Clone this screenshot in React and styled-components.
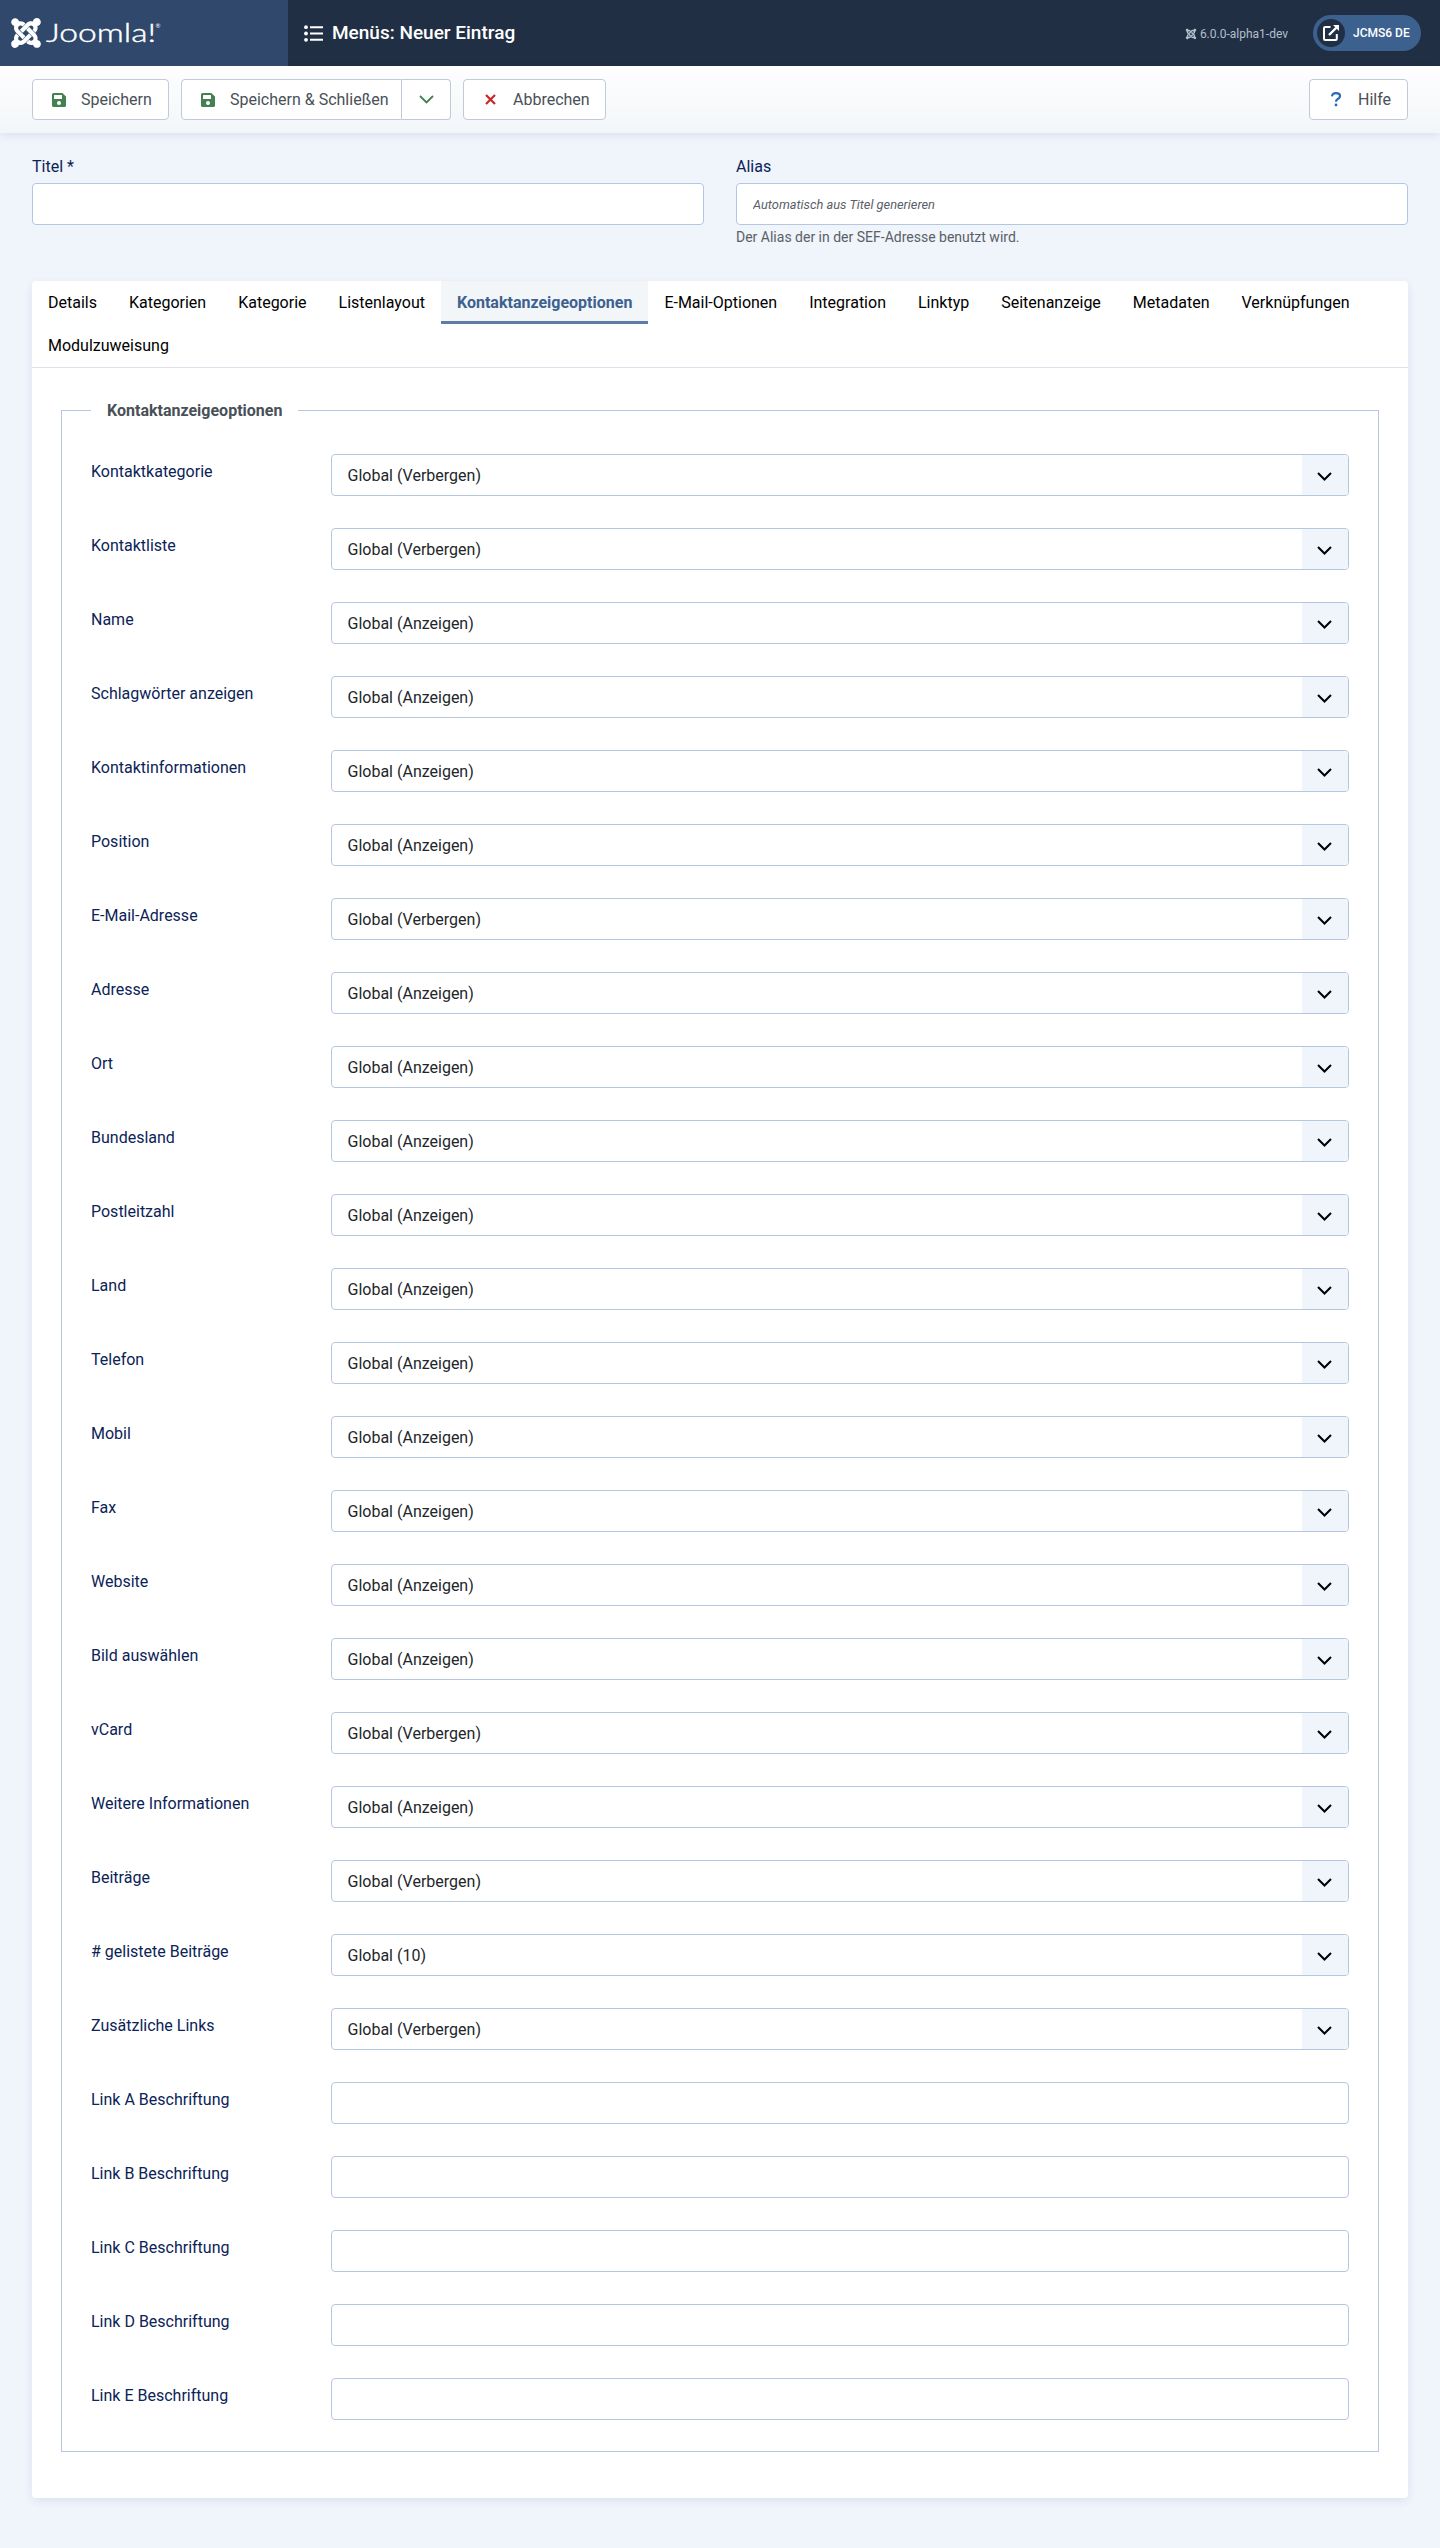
import React from "react";
import styled, { createGlobalStyle, css } from "styled-components";
import { FaJoomla } from "react-icons/fa";

const GlobalStyle = createGlobalStyle`
  *, *::before, *::after { box-sizing: border-box; }
  body {
    margin: 0;
    background: #f0f4fb;
    color: #22262a;
    font-family: Roboto, "Liberation Sans", sans-serif;
    font-size: 16px;
    line-height: 24px;
  }
`;

const Page = styled.div`
  min-height: 2548px;
`;

const Header = styled.header`
  display: flex;
  align-items: center;
  height: 66px;
  background: #212f45;
  color: #fff;
`;

const Brand = styled.div`
  display: flex;
  align-items: center;
  width: 288px;
  height: 66px;
  padding-left: 11px;
  background: #2f486b;
  svg { display: block; }
`;

const PageTitle = styled.h1`
  display: flex;
  align-items: center;
  gap: 9px;
  flex: 1;
  margin: 0;
  padding-left: 16px;
  font-size: 19px;
  font-weight: 500;
  line-height: 24px;
  svg { display: block; }
`;

const Version = styled.div`
  display: flex;
  align-items: center;
  gap: 3px;
  margin-right: 25px;
  padding-top: 1px;
  font-size: 12px;
  line-height: 20px;
  color: #b3bfcc;
`;

const SitePill = styled.a`
  display: flex;
  align-items: center;
  gap: 8px;
  width: 108px;
  height: 36px;
  margin-right: 19px;
  padding-left: 4px;
  border-radius: 18px;
  background: #3d618f;
  font-size: 12px;
  font-weight: 500;
  white-space: nowrap;
`;

const PillIcon = styled.span`
  display: flex;
  align-items: center;
  justify-content: center;
  width: 28px;
  height: 28px;
  border-radius: 50%;
  background: #212f45;
`;

const Toolbar = styled.div`
  display: flex;
  gap: 12px;
  height: 67px;
  padding: 13px 32px 0;
  background: linear-gradient(#fefeff, #f3f6f9);
  box-shadow: 0 3px 8px -1px rgba(40, 80, 140, 0.12);
`;

const ToolButton = styled.button`
  display: flex;
  align-items: center;
  width: ${(p) => p.$width}px;
  height: 41px;
  padding: 0 0 0 ${(p) => p.$inset}px;
  gap: ${(p) => p.$gap || 0}px;
  border: 1px solid #c1cad9;
  border-radius: 4px;
  background: #fff;
  color: #495057;
  font: inherit;
  white-space: nowrap;
  svg { display: block; flex: none; }
  ${(p) => p.$push && css`margin-left: auto;`}
`;

const ButtonGroup = styled.div`
  display: flex;
  ${ToolButton}:first-child { border-radius: 4px 0 0 4px; }
  ${ToolButton}:last-child { border-left: 0; border-radius: 0 4px 4px 0; }
`;

const TitleRow = styled.div`
  display: grid;
  grid-template-columns: 1fr 1fr;
  gap: 32px;
  height: 148px;
  padding: 22px 32px 0;
`;

const Field = styled.div`
  display: flex;
  flex-direction: column;
`;

const Label = styled.label`
  color: #0b2357;
`;

const Input = styled.input`
  display: block;
  width: 100%;
  height: 42px;
  padding: 0 16px 2px;
  border: 1px solid #b5c7e0;
  border-radius: 4px;
  background: #fff;
  font: inherit;
  outline: none;
  ${Field} > & { margin-top: 4px; }
  &::placeholder {
    color: #5a6067;
    font-size: 12.8px;
    font-style: italic;
    opacity: 1;
  }
`;

const Hint = styled.small`
  margin-top: 2px;
  font-size: 14px;
  line-height: 21px;
  color: #5a6067;
`;

const Card = styled.main`
  height: 2217px;
  margin: 0 32px;
  border-radius: 4px;
  background: #fff;
  box-shadow: 0 3px 10px -1px rgba(40, 80, 140, 0.12);
`;

const Tabs = styled.nav`
  display: flex;
  flex-wrap: wrap;
  height: 87px;
  border-bottom: 1px solid #dbe2ec;
`;

const Tab = styled.button`
  height: 43px;
  padding: 0 16px;
  border: 0;
  background: none;
  color: #000;
  font: inherit;
  ${(p) => p.$active && css`
    background: #f3f6f9;
    color: #3d618f;
    font-weight: 700;
    box-shadow: inset 0 -3px #5f7ca8;
  `}
`;

const Group = styled.fieldset`
  height: 2054px;
  margin: 30px 29px 0;
  padding: 0 29px;
  border: 1px solid #b5c7e0;
`;

const Legend = styled.legend`
  height: 24px;
  padding: 1px 16px 0;
  color: #495057;
  font-weight: 700;
`;

const Rows = styled.div`
  display: grid;
  grid-auto-rows: 42px;
  row-gap: 32px;
  padding-top: 32px;
`;

const Row = styled.div`
  display: grid;
  grid-template-columns: 240px 1fr;
  ${Label} { padding-top: 6px; }
`;

const Select = styled.div`
  display: flex;
  align-items: center;
  justify-content: space-between;
  height: 42px;
  padding-left: 15.5px;
  border: 1px solid #b5c7e0;
  border-radius: 4px;
  overflow: hidden;
  color: #22262a;
`;

const Value = styled.span`
  padding-top: 2px;
`;

const Arrow = styled.span`
  display: flex;
  justify-content: center;
  align-items: center;
  width: 46px;
  height: 40px;
  padding: 3px 2px 0 0;
  background: #f0f4fb;
`;

const V = "Global (Verbergen)";
const A = "Global (Anzeigen)";
const selects = [
  ["Kontaktkategorie", V], ["Kontaktliste", V], ["Name", A],
  ["Schlagwörter anzeigen", A], ["Kontaktinformationen", A], ["Position", A],
  ["E-Mail-Adresse", V], ["Adresse", A], ["Ort", A], ["Bundesland", A],
  ["Postleitzahl", A], ["Land", A], ["Telefon", A], ["Mobil", A], ["Fax", A],
  ["Website", A], ["Bild auswählen", A], ["vCard", V],
  ["Weitere Informationen", A], ["Beiträge", V],
  ["# gelistete Beiträge", "Global (10)"], ["Zusätzliche Links", V],
];
const links = ["A", "B", "C", "D", "E"].map((c) => `Link ${c} Beschriftung`);
const tabs = [
  "Details", "Kategorien", "Kategorie", "Listenlayout", "Kontaktanzeigeoptionen",
  "E-Mail-Optionen", "Integration", "Linktyp", "Seitenanzeige", "Metadaten",
  "Verknüpfungen", "Modulzuweisung",
];

const SaveIcon = () => (
  <svg width="14" height="14" viewBox="0 0 14 14">
    <path fillRule="evenodd" fill="#448152" d="M1.6 0H10.3L14 3.6V12.4Q14 14 12.4 14H1.6Q0 14 0 12.4V1.6Q0 0 1.6 0ZM2.5 2.1Q2 2.1 2 2.6V5.4Q2 5.9 2.5 5.9H9.5Q10 5.9 10 5.4V2.6Q10 2.1 9.5 2.1ZM7 8A2 2 0 1 0 7 12A2 2 0 1 0 7 8Z" />
  </svg>
);

const Chevron = ({ color, width = 1.8 }) => (
  <svg width="15" height="9" viewBox="0 0 15 9">
    <path d="M1 1L7.5 7.5L14 1" fill="none" stroke={color} strokeWidth={width} />
  </svg>
);

const JoomlaLogo = () => (
  <svg width="152" height="34" viewBox="0 0 152 34" fill="#fff">
    <FaJoomla x="-2" y="0" size={34} />
    <text x="35" y="26" fontFamily="Lato" fontWeight="300" fontSize="25" textLength="86" lengthAdjust="spacingAndGlyphs" transform="translate(35 0) scale(1.28 1) translate(-35 0)" stroke="#fff" strokeWidth="0.4">Joomla!</text>
    <text x="144.5" y="12" fontFamily="Lato" fontSize="6">®</text>
  </svg>
);

const ListIcon = () => (
  <svg width="19" height="17" viewBox="0 0 19 17" fill="#fff">
    <circle cx="2" cy="2.2" r="1.9" />
    <circle cx="2" cy="8.5" r="1.9" />
    <circle cx="2" cy="14.8" r="1.9" />
    <path d="M6 1.2h13v2H6zM6 7.5h13v2H6zM6 13.8h13v2H6z" />
  </svg>
);

const ExternalIcon = () => (
  <svg width="18" height="18" viewBox="0 0 18 18" fill="none" stroke="#fff" strokeWidth="2">
    <path d="M8.5 3H3.2Q2 3 2 4.2V14.8Q2 16 3.2 16H13.6Q14.8 16 14.8 14.8V10" />
    <path d="M7 11L15 3" strokeWidth="2.4" />
    <path d="M11 1H17V7Z" fill="#fff" stroke="none" />
  </svg>
);

export default function App() {
  return (
    <Page>
      <GlobalStyle />
      <Header>
        <Brand><JoomlaLogo /></Brand>
        <PageTitle><ListIcon />Menüs: Neuer Eintrag</PageTitle>
        <Version><FaJoomla size={12} />6.0.0-alpha1-dev</Version>
        <SitePill><PillIcon><ExternalIcon /></PillIcon>JCMS6 DE</SitePill>
      </Header>
      <Toolbar>
        <ToolButton $width={137} $inset={19} $gap={15}><SaveIcon />Speichern</ToolButton>
        <ButtonGroup>
          <ToolButton $width={221} $inset={19} $gap={15}><SaveIcon />Speichern &amp; Schließen</ToolButton>
          <ToolButton $width={49} $inset={17} aria-label="Mehr"><Chevron color="#448152" /></ToolButton>
        </ButtonGroup>
        <ToolButton $width={143} $inset={21} $gap={17}>
          <svg width="11" height="11" viewBox="0 0 11 11"><path d="M1 1L10 10M10 1L1 10" stroke="#c52827" strokeWidth="2.2" /></svg>
          Abbrechen
        </ToolButton>
        <ToolButton $width={99} $inset={21} $gap={17} $push>
          <svg width="10" height="15" viewBox="0 0 10 15"><path d="M1 4.4Q1.2 1.1 5 1.1Q9 1.1 9 4.1Q9 5.8 6.8 7Q5 8 5 9.8" fill="none" stroke="#2a69b8" strokeWidth="2.1" /><circle cx="5" cy="13" r="1.4" fill="#2a69b8" /></svg>
          Hilfe
        </ToolButton>
      </Toolbar>
      <TitleRow>
        <Field><Label>Titel *</Label><Input /></Field>
        <Field>
          <Label>Alias</Label>
          <Input placeholder="Automatisch aus Titel generieren" />
          <Hint>Der Alias der in der SEF-Adresse benutzt wird.</Hint>
        </Field>
      </TitleRow>
      <Card>
        <Tabs>
          {tabs.map((t) => <Tab key={t} $active={t === "Kontaktanzeigeoptionen"}>{t}</Tab>)}
        </Tabs>
        <Group>
          <Legend>Kontaktanzeigeoptionen</Legend>
          <Rows>
            {selects.map(([name, value]) => (
              <Row key={name}>
                <Label>{name}</Label>
                <Select><Value>{value}</Value><Arrow><Chevron color="#000" width={2} /></Arrow></Select>
              </Row>
            ))}
            {links.map((name) => <Row key={name}><Label>{name}</Label><Input /></Row>)}
          </Rows>
        </Group>
      </Card>
    </Page>
  );
}
